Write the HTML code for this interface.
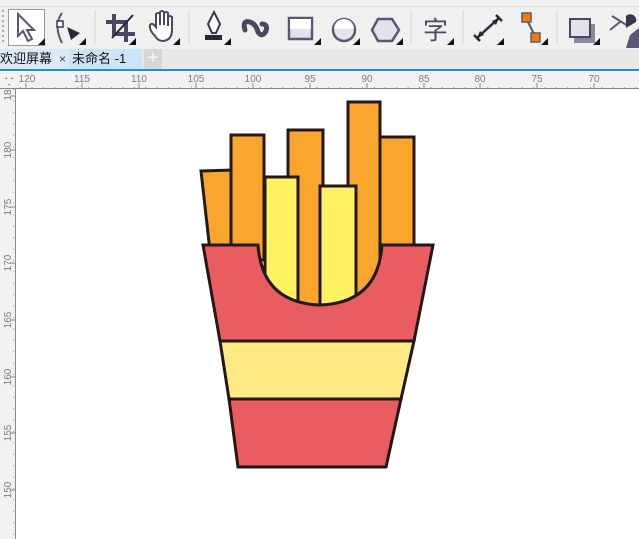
<!DOCTYPE html>
<html><head><meta charset="utf-8"><style>
body{margin:0;width:639px;height:539px;overflow:hidden;background:#fff;font-family:"Liberation Sans","Noto Sans CJK SC",sans-serif;position:relative}
.a{position:absolute}
</style></head><body>
<div class="a" style="left:0;top:0;width:639px;height:6px;background:#f0f0f0;border-bottom:1px solid #dcdcdc"></div>
<div class="a" style="left:0;top:7px;width:639px;height:42px;background:#f0f0f0"></div>
<svg class="a" style="left:0;top:0" width="639" height="50">
<g fill="#aaa"><rect x="2" y="10" width="2" height="2"/><rect x="2" y="15" width="2" height="2"/><rect x="2" y="20" width="2" height="2"/><rect x="2" y="25" width="2" height="2"/><rect x="2" y="30" width="2" height="2"/><rect x="2" y="35" width="2" height="2"/><rect x="2" y="40" width="2" height="2"/></g>
<rect x="8.5" y="9.5" width="36" height="36" fill="#fff" stroke="#9a9a9a"/>
<g stroke="#d4d4d4"><line x1="95" y1="10" x2="95" y2="44"/><line x1="189" y1="10" x2="189" y2="44"/><line x1="411" y1="10" x2="411" y2="44"/><line x1="463" y1="10" x2="463" y2="44"/><line x1="557" y1="10" x2="557" y2="44"/></g>
<!-- select arrow -->
<path d="M18 14 L18 36 L23 31 L28 41 L32 39 L27 30 L34 30 Z" fill="#fff" stroke="#5a5870" stroke-width="2"/>
<!-- shape tool -->
<path d="M62 13 Q53 25 62 43" fill="none" stroke="#5a5870" stroke-width="2"/>
<rect x="57" y="21" width="6" height="6" fill="#fff" stroke="#3a3850" stroke-width="1.5"/>
<path d="M67 27 L80 33 L71 40 Z" fill="#2a2838"/>
<!-- crop -->
<g stroke="#4a4860" stroke-width="4" fill="none"><path d="M114 14 V34 H135"/><path d="M106 22 H126 V42"/></g>
<line x1="112" y1="38" x2="133" y2="15" stroke="#2a2838" stroke-width="2"/>
<!-- hand -->
<path d="M155 36 Q149 30 150 25 Q152 22 156 27 V14 Q158 12 160 14 V25 V12 Q162 10 164 12 V25 V13 Q166 11 168 13 V26 V17 Q170 15 172 17 V30 Q172 40 163 41 Q158 41 155 36 Z" fill="#fff" stroke="#4a4860" stroke-width="2"/>
<!-- pen -->
<path d="M214 12 L220 24 L216 33 L212 33 L208 24 Z" fill="#fff" stroke="#3a3850" stroke-width="2"/>
<rect x="205" y="35" width="17" height="5" fill="#2a2838"/>
<!-- curve -->
<path d="M245 30 Q242 20 250 22 Q256 24 258 32 Q262 38 266 31 Q268 24 262 24" fill="none" stroke="#4a4860" stroke-width="5" stroke-linecap="round"/>
<!-- rect -->
<rect x="289" y="18" width="23" height="21" fill="#e2e2ec" stroke="#5a5870" stroke-width="2.5"/><rect x="290" y="19" width="21" height="10" fill="#fff"/>
<!-- ellipse -->
<circle cx="344" cy="30" r="11" fill="#e2e2ec" stroke="#5a5870" stroke-width="2.5"/><path d="M334 29 A10 10 0 0 1 354 29 Z" fill="#fff"/>
<!-- polygon -->
<path d="M378 19 H392 L399 30 L392 41 H378 L372 30 Z" fill="#e2e2ec" stroke="#5a5870" stroke-width="2.5"/>
<!-- text 字 -->
<text x="423" y="39" font-size="25" fill="#4a4860" font-family="Noto Sans CJK SC,sans-serif">字</text>
<!-- dimension -->
<line x1="477" y1="38" x2="499" y2="18" stroke="#2a2838" stroke-width="2.5"/>
<path d="M474 35 L480 41 M496 15 L502 21" stroke="#2a2838" stroke-width="2.5"/>
<path d="M477 38 L480 31 L484 35 Z M499 18 L492 21 L496 25 Z" fill="#2a2838"/>
<!-- connector -->
<line x1="527" y1="20" x2="535" y2="36" stroke="#5a5870" stroke-width="2"/>
<rect x="522" y="13" width="9" height="9" fill="#ff7a00" stroke="#5a5870" stroke-width="1.5"/>
<rect x="531" y="33" width="9" height="9" fill="#ff7a00" stroke="#5a5870" stroke-width="1.5"/>
<!-- shadow -->
<rect x="574" y="24" width="21" height="19" fill="#8a88a0"/>
<rect x="570" y="19" width="20" height="18" fill="#e2e2ec" stroke="#4a4860" stroke-width="2"/>
<!-- transparency -->
<path d="M612 16 L628 26 M610 30 L620 22" stroke="#5a5870" stroke-width="2"/>
<path d="M626 16 A6 6 0 0 1 636 22 L626 28 Z" fill="#3a3850"/>
<path d="M630 35 L639 28 V48 H626 Z" fill="#5a5870"/>
<g fill="#111"><path d="M45 43 V36 L38 43Z" transform="translate(0,2)"/><path d="M86 45 V38 L79 45Z"/><path d="M136 45 V38 L129 45Z"/><path d="M180 45 V38 L173 45Z"/><path d="M231 45 V38 L224 45Z"/><path d="M321 45 V38 L314 45Z"/><path d="M360 45 V38 L353 45Z"/><path d="M403 45 V38 L396 45Z"/><path d="M454 45 V38 L447 45Z"/><path d="M504 45 V38 L497 45Z"/><path d="M548 45 V38 L541 45Z"/><path d="M600 45 V38 L593 45Z"/></g>
</svg>
<!-- tabs -->
<div class="a" style="left:0;top:49px;width:639px;height:20px;background:#e8e8e8"></div>
<div class="a" style="left:0;top:49px;width:68px;height:20px;background:#dbeaf8;font-size:13px;line-height:20px;color:#111">欢迎屏幕 <span style="font-size:12px;color:#444">&nbsp;×</span></div>
<div class="a" style="left:69px;top:49px;width:73px;height:20px;background:#cce4f7;font-size:13px;line-height:20px;color:#111;padding-left:3px;box-sizing:border-box">未命名 -1</div>
<div class="a" style="left:144px;top:49px;width:18px;height:20px;background:#d6d6d6;color:#f4f4f4;font-size:20px;line-height:19px;text-align:center">+</div>
<div class="a" style="left:0;top:69px;width:639px;height:2px;background:#1e8fd8"></div>
<!-- rulers -->
<div class="a" style="left:0;top:71px;width:639px;height:18px;background:#f2f2f2;border-bottom:1px solid #8a8a8a;box-sizing:border-box"></div>
<div class="a" style="left:0;top:89px;width:15px;height:450px;background:#f2f2f2;border-right:1px solid #8a8a8a"></div>
<svg class="a" style="left:0;top:71px" width="639" height="468">
<text x="5" y="14" font-size="10" fill="#000">⸪</text>
<g font-size="10" fill="#7a7a8a" text-anchor="middle">
<text x="27" y="11">120</text><text x="82" y="11">115</text><text x="139" y="11">110</text><text x="196" y="11">105</text><text x="253" y="11">100</text><text x="310" y="11">95</text><text x="367" y="11">90</text><text x="424" y="11">85</text><text x="480" y="11">80</text><text x="537" y="11">75</text><text x="594" y="11">70</text>
</g>
<g stroke="#8a8a8a">
<path d="M26 12V17M82 12V17M139 12V17M196 12V17M253 12V17M310 12V17M367 12V17M424 12V17M480 12V17M537 12V17M594 12V17"/>
</g>
<g fill="#9a9a9a"><rect x="20" y="16" width="620" height="1" fill="none"/></g>
<path d="M20 16.5H639" stroke="#9a9a9a" stroke-dasharray="1 10.4"/>
<path d="M13.5 18V468" stroke="#9a9a9a" stroke-dasharray="1 10.4"/>
<g font-size="10" fill="#7a7a8a" text-anchor="middle">
<text transform="translate(11,79) rotate(-90)">180</text><text transform="translate(11,136) rotate(-90)">175</text><text transform="translate(11,192) rotate(-90)">170</text><text transform="translate(11,249) rotate(-90)">165</text><text transform="translate(11,306) rotate(-90)">160</text><text transform="translate(11,362) rotate(-90)">155</text><text transform="translate(11,419) rotate(-90)">150</text><text transform="translate(11,24) rotate(-90)">18</text>
</g>
<path d="M10 79H15M10 136H15M10 192H15M10 249H15M10 306H15M10 362H15M10 419H15M10 25H15" stroke="#8a8a8a"/>
</svg>
<!-- fries -->
<svg class="a" style="left:0;top:0" width="639" height="539">
<g stroke="#231815" stroke-width="3" stroke-linejoin="miter">
<path d="M201 171 L233 170 L233 260 L211 260 Z" fill="#F9A52E"/>
<rect x="231" y="135" width="33" height="125" fill="#F9A52E"/>
<rect x="288" y="130" width="35" height="180" fill="#F9A52E"/>
<rect x="348" y="102" width="32" height="200" fill="#F9A52E"/>
<rect x="380" y="137" width="34" height="120" fill="#F9A52E"/>
<rect x="265" y="177" width="33" height="130" fill="#FFF263"/>
<rect x="320" y="186" width="36" height="120" fill="#FFF263"/>
<path d="M203 245 L258 245 Q262 303 320 305 Q378 303 382 245 L433 245 L414 341 L220 341 Z" fill="#E95C60"/>
<path d="M220 341 L414 341 L401 399 L229 399 Z" fill="#FFE985"/>
<path d="M229 399 L401 399 L386 467 L238 467 Z" fill="#E95C60"/>
</g>
</svg>
</body></html>
